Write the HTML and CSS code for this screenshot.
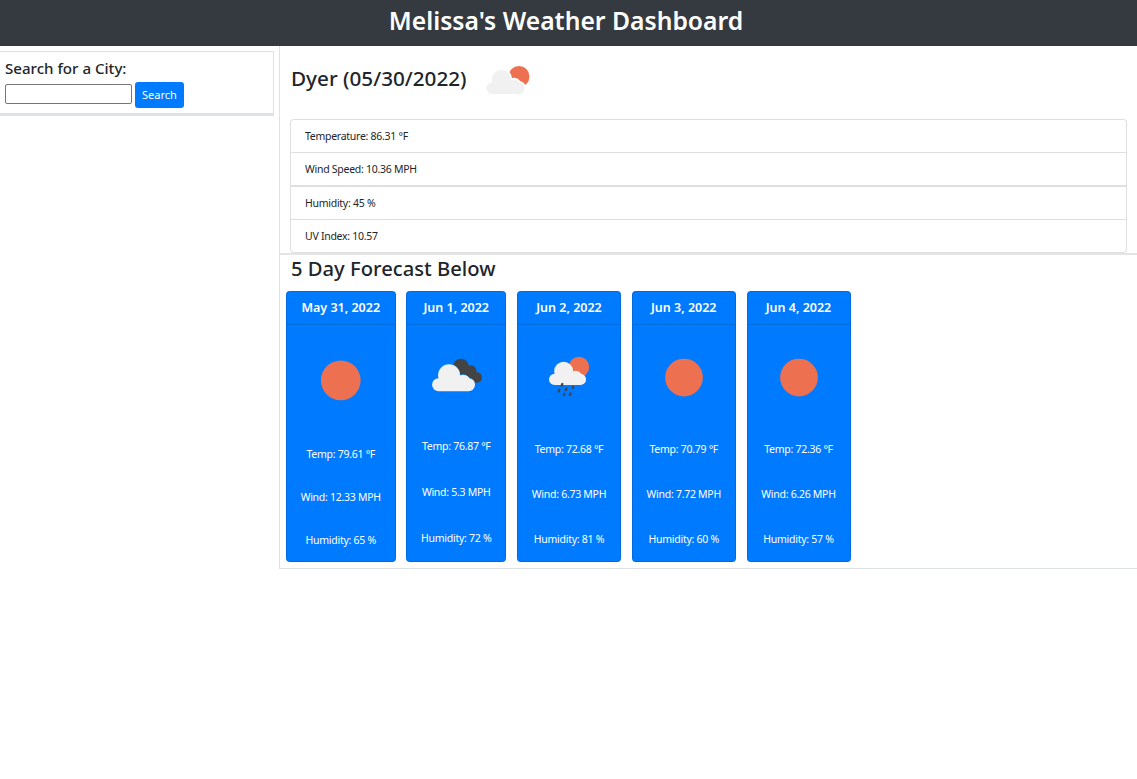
FILE: index.html
```html
<!DOCTYPE html>
<html lang="en">
<head>
    <meta charset="UTF-8">
    <meta name="viewport" content="width=device-width, initial-scale=1.0">
    <title>Melissa's Weather Dashboard</title>
    <link rel="stylesheet" href="styles.css">
</head>
<body>

<!-- shared cloud shape for the weather icons -->
<svg class="icon-defs" aria-hidden="true">
    <symbol id="cloud" viewBox="0 0 43 27" overflow="visible">
        <rect x="0" y="14" width="43" height="13" rx="6.5"/>
        <circle cx="17" cy="11" r="11"/>
        <circle cx="31" cy="18" r="7.5"/>
    </symbol>
</svg>

<header class="app-header">
    <h1>Melissa's Weather Dashboard</h1>
</header>

<div class="layout">
    <aside class="sidebar">
        <form class="search-box">
            <label for="city">Search for a City:</label>
            <div class="search-row">
                <input type="text" id="city" name="city">
                <button type="button" class="search-btn">Search</button>
            </div>
        </form>
    </aside>

    <main class="main">
        <div class="current-head">
            <h2>Dyer (05/30/2022)</h2>
            <svg class="current-icon" viewBox="0 0 46 36">
                <circle cx="34" cy="14.5" r="10.5" fill="#ed7050"/>
                <use href="#cloud" x="0" y="7" width="40" height="25" fill="#fff" stroke="#fff" stroke-width="2"/>
                <use href="#cloud" x="1" y="8" width="39" height="24" fill="#f1f1f1"/>
            </svg>
        </div>

        <ul class="stat-list">
            <li>Temperature: 86.31 °F</li>
            <li>Wind Speed: 10.36 MPH</li>
        </ul>
        <ul class="stat-list">
            <li>Humidity: 45 %</li>
            <li>UV Index: 10.57</li>
        </ul>

        <hr class="divider">
        <h3 class="forecast-title">5 Day Forecast Below</h3>

        <div class="forecast">
            <div class="card">
                <div class="card-header">May 31, 2022</div>
                <div class="card-body">
                    <svg class="card-icon" viewBox="0 0 100 100"><circle cx="50" cy="51.5" r="18.5" fill="#ed7050"/></svg>
                    <p>Temp: 79.61 °F</p>
                    <p>Wind: 12.33 MPH</p>
                    <p>Humidity: 65 %</p>
                </div>
            </div>
            <div class="card">
                <div class="card-header">Jun 1, 2022</div>
                <div class="card-body">
                    <svg class="card-icon" viewBox="0 0 100 100">
                        <g fill="#444">
                            <circle cx="55" cy="42.5" r="8"/>
                            <circle cx="65" cy="47" r="6"/>
                            <circle cx="71" cy="53.5" r="5.5"/>
                            <circle cx="60" cy="50" r="7"/>
                            <circle cx="67" cy="54" r="5"/>
                        </g>
                        <use href="#cloud" x="25.5" y="40" width="44" height="27.5" fill="#007bff" stroke="#007bff" stroke-width="1"/>
                        <use href="#cloud" x="25.5" y="40" width="44" height="27.5" fill="#f1f1f1"/>
                    </svg>
                    <p>Temp: 76.87 °F</p>
                    <p>Wind: 5.3 MPH</p>
                    <p>Humidity: 72 %</p>
                </div>
            </div>
            <div class="card">
                <div class="card-header">Jun 2, 2022</div>
                <div class="card-body">
                    <svg class="card-icon" viewBox="0 0 100 100">
                        <circle cx="59.8" cy="41.2" r="10" fill="#ed7050"/>
                        <use href="#cloud" x="30.4" y="36" width="36.3" height="22.8" fill="#f1f1f1"/>
                        <g stroke="#444" stroke-width="2.2">
                            <path d="M43.8 57l-1.4 3.4"/>
                            <path d="M41 62.6l-1.4 3.4"/>
                            <path d="M47.8 61.3l-1.4 3.4"/>
                            <path d="M54.4 60l-1 2.6"/>
                            <path d="M45.7 66.8l-1 2.6"/>
                            <path d="M51.8 66.3l-1.4 3.4"/>
                        </g>
                    </svg>
                    <p>Temp: 72.68 °F</p>
                    <p>Wind: 6.73 MPH</p>
                    <p>Humidity: 81 %</p>
                </div>
            </div>
            <div class="card">
                <div class="card-header">Jun 3, 2022</div>
                <div class="card-body">
                    <svg class="card-icon" viewBox="0 0 100 100"><circle cx="50" cy="51.5" r="18.5" fill="#ed7050"/></svg>
                    <p>Temp: 70.79 °F</p>
                    <p>Wind: 7.72 MPH</p>
                    <p>Humidity: 60 %</p>
                </div>
            </div>
            <div class="card">
                <div class="card-header">Jun 4, 2022</div>
                <div class="card-body">
                    <svg class="card-icon" viewBox="0 0 100 100"><circle cx="50" cy="51.5" r="18.5" fill="#ed7050"/></svg>
                    <p>Temp: 72.36 °F</p>
                    <p>Wind: 6.26 MPH</p>
                    <p>Humidity: 57 %</p>
                </div>
            </div>
        </div>
    </main>
</div>

</body>
</html>
```

FILE: styles.css
```css
* {
    box-sizing: border-box;
}
body {
    margin: 0;
    font-family: "Noto Sans", "Open Sans", sans-serif;
    color: #212529;
    background-color: #fff;
}
.icon-defs {
    display: none;
}
.app-header {
    height: 46px;
    padding: 0 5px 5px 0;
    background-color: #343a40;
    display: flex;
    justify-content: center;
    align-items: center;
}
.app-header h1 {
    margin: 0;
    font-size: 24.7px;
    font-weight: 600;
    color: #fff;
}
.layout {
    display: flex;
    align-items: flex-start;
}
.sidebar {
    width: 279px;
    flex: none;
    padding: 5px 5px 0 0;
}
.search-box {
    height: 65px;
    padding: 6px 5px 0;
    border: 1px solid #dee2e6;
    border-left: none;
    border-bottom-width: 3px;
}
.search-box label {
    display: block;
    font-size: 15.1px;
    font-weight: 500;
    line-height: 20px;
}
.search-row {
    display: flex;
    align-items: flex-start;
    gap: 3px;
    margin-top: 4px;
}
.search-row input {
    width: 127px;
    height: 20px;
    margin-top: 2px;
    padding: 0 2px;
    border: 1px solid #767676;
    border-radius: 2px;
    background: #fff;
}
.search-btn {
    width: 49px;
    height: 26px;
    padding: 0 0 2px;
    border: none;
    border-radius: 3px;
    background-color: #007bff;
    color: #fff;
    font-family: inherit;
    font-size: 11px;
}
.main {
    flex: 1;
    border-left: 1px solid #dee2e6;
    border-bottom: 1px solid #dee2e6;
}
.current-head {
    height: 73px;
    padding: 16px 0 21px 11px;
    display: flex;
    align-items: center;
}
.current-head h2 {
    margin: -5px 0 0;
    font-size: 20.7px;
    font-weight: 500;
}
.current-icon {
    width: 46px;
    height: 36px;
    margin-left: 18px;
}
.stat-list {
    list-style: none;
    margin: 0 10px;
    padding: 0;
    border: 1px solid rgba(0, 0, 0, 0.125);
    border-radius: 4px 4px 0 0;
}
.stat-list + .stat-list {
    border-top: none;
    border-radius: 0 0 4px 4px;
}
.stat-list li {
    height: 32px;
    padding: 0 14px;
    font-size: 10.5px;
    letter-spacing: -0.27px;
    line-height: 32px;
}
.stat-list li + li {
    height: 33px;
    border-top: 1px solid rgba(0, 0, 0, 0.125);
}
.stat-list:first-of-type {
    border-bottom-width: 2px;
}
.divider {
    height: 2px;
    margin: 0;
    border: none;
    background-color: rgba(0, 0, 0, 0.1);
}
.forecast-title {
    height: 36px;
    margin: 0;
    padding-left: 11px;
    font-size: 20.2px;
    font-weight: 500;
    line-height: 27px;
}
.forecast {
    display: grid;
    grid-template-columns: 109.5px 100px 104px 104px 104px;
    column-gap: 10.75px;
    height: 271px;
    margin: 0 0 6px 6px;
}
.card {
    display: flex;
    flex-direction: column;
    border: 1px solid rgba(0, 0, 0, 0.125);
    border-radius: 4px;
    background-color: #007bff;
    color: #fff;
}
.card-header {
    height: 33px;
    border-bottom: 1px solid rgba(0, 0, 0, 0.125);
    font-size: 12.5px;
    font-weight: 600;
    line-height: 32px;
    text-align: center;
}
.card-body {
    flex: 1;
    display: flex;
    flex-direction: column;
}
.card-icon {
    display: block;
    width: 100%;
    flex: none;
}
.card-body p {
    flex: 1;
    display: flex;
    align-items: center;
    justify-content: center;
    margin: 0;
    font-size: 10.5px;
    letter-spacing: -0.27px;
}
```
